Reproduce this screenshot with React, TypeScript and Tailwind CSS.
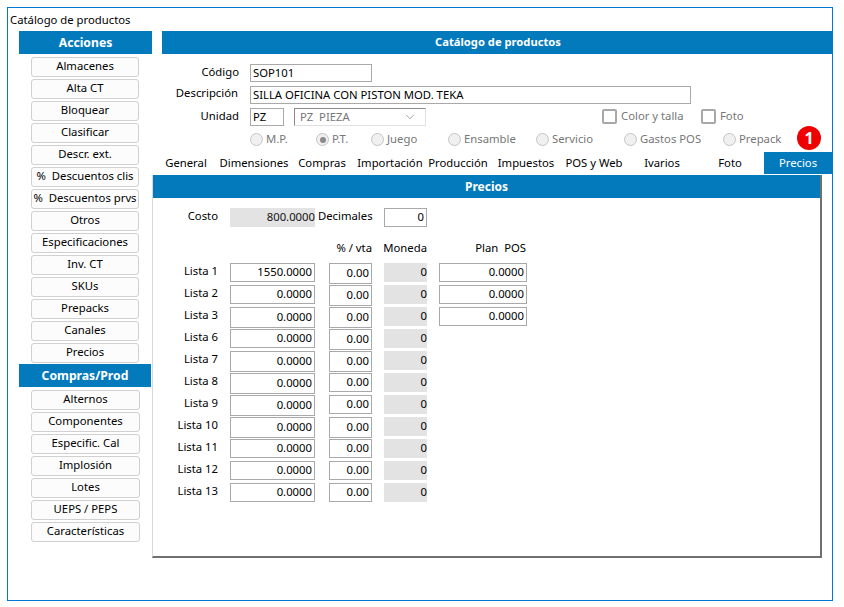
import { ChevronDown } from "lucide-react";

const accionesItems = ["Almacenes", "Alta CT", "Bloquear", "Clasificar", "Descr. ext.", "%  Descuentos clis", "%  Descuentos prvs", "Otros", "Especificaciones", "Inv. CT", "SKUs", "Prepacks", "Canales", "Precios"];
const comprasItems = ["Alternos", "Componentes", "Especific. Cal", "Implosión", "Lotes", "UEPS / PEPS", "Características"];
const tabs = ["General", "Dimensiones", "Compras", "Importación", "Producción", "Impuestos", "POS y Web", "Ivarios", "Foto", "Precios"];
const listas = [
  { name: "Lista 1", price: "1550.0000", plan: "0.0000", pctTall: true },
  { name: "Lista 2", price: "0.0000", plan: "0.0000", pctTall: true },
  { name: "Lista 3", price: "0.0000", plan: "0.0000", priceTall: true, pctTall: true },
  { name: "Lista 6", price: "0.0000", pctTall: true },
  { name: "Lista 7", price: "0.0000", priceTall: true, pctTall: true },
  { name: "Lista 8", price: "0.0000", priceTall: true },
  { name: "Lista 9", price: "0.0000", priceTall: true },
  { name: "Lista 10", price: "0.0000", priceTall: true, pctTall: true },
  { name: "Lista 11", price: "0.0000" },
  { name: "Lista 12", price: "0.0000" },
  { name: "Lista 13", price: "0.0000" },
];
const radios = [
  { label: "M.P.", w: "w-[66px]" },
  { label: "P.T.", w: "w-[55px]", checked: true },
  { label: "Juego", w: "w-[77px]" },
  { label: "Ensamble", w: "w-[88px]" },
  { label: "Servicio", w: "w-[88px]" },
  { label: "Gastos POS", w: "w-[99px]" },
  { label: "Prepack", w: "w-[74px]" },
];

function SideHeader({ title, className }: { title: string; className: string }) {
  return (
    <div className={`h-[23px] bg-[#037abb] text-white font-bold text-[12.2px] flex items-center justify-center pt-[2px] ${className}`}>
      {title}
    </div>
  );
}

function SideButton({ label, className }: { label: string; className: string }) {
  return (
    <button className={`h-[20px] ml-[12px] rounded-[3px] border border-[#d0d0d0] bg-[#fcfcfc] text-black text-center leading-[14px] pb-[3px] whitespace-pre ${className}`}>
      {label}
    </button>
  );
}

function Field({ value, className, align = "right" }: { value: string; className: string; align?: "left" | "right" }) {
  return (
    <div className={`border border-[#a9a9a9] bg-white px-[2px] flex items-center shrink-0 whitespace-nowrap text-black ${align === "right" ? "justify-end" : "justify-start"} ${className}`}>
      {value}
    </div>
  );
}

function Radio({ label, w, checked }: { label: string; w: string; checked?: boolean }) {
  return (
    <div className={`flex items-center gap-[3px] text-[#777] ${w}`}>
      <span className="w-[13px] h-[13px] rounded-full border border-[#c4c4c4] bg-[#f0f0f0] flex items-center justify-center">
        {checked && <span className="w-[6px] h-[6px] rounded-full bg-[#8a8a8a]" />}
      </span>
      {label}
    </div>
  );
}

function Check({ label, className }: { label: string; className: string }) {
  return (
    <div className={`flex items-center gap-[4px] text-[#777] ${className}`}>
      <span className="w-[15px] h-[15px] rounded-[2px] border-2 border-[#a8a8a8] bg-white" />
      {label}
    </div>
  );
}

export default function App() {
  return (
    <div className="w-[844px] h-[607px] bg-white pt-[7px] pl-[7px] text-[11.3px] text-black" style={{ fontFamily: '"Noto Sans", sans-serif' }}>
      <div className="w-[826px] h-[594px] border border-[#0078d7] flex flex-col">
        <div className="h-[23px] pl-[2px] pt-[3px] leading-[17px] shrink-0">Catálogo de productos</div>
        <div className="flex flex-1 pl-[11px]">
          {/* barra lateral */}
          <div className="w-[133px] shrink-0 flex flex-col">
            <SideHeader title="Acciones" className="w-[133px]" />
            <div className="flex flex-col gap-[2px] mt-[3px]">
              {accionesItems.map((item) => (
                <SideButton key={item} label={item} className="w-[108px]" />
              ))}
            </div>
            <SideHeader title="Compras/Prod" className="w-[132px] mt-[1px]" />
            <div className="flex flex-col gap-[2px] mt-[3px]">
              {comprasItems.map((item) => (
                <SideButton key={item} label={item} className="w-[109px]" />
              ))}
            </div>
          </div>

          {/* contenido */}
          <div className="w-[680px] flex flex-col">
            <div className="ml-[10px] h-[23px] bg-[#037abb] text-white font-bold text-[11.2px] flex items-center justify-center pl-[2px]">
              Catálogo de productos
            </div>

            <div className="flex items-center mt-[10px] h-[18px]">
              <span className="w-[87px] text-right pb-[2px]">Código</span>
              <Field value="SOP101" align="left" className="ml-[11px] w-[122px] h-[18px]" />
            </div>
            <div className="flex items-center mt-[4px] h-[18px]">
              <span className="w-[86px] text-right pb-[4px]">Descripción</span>
              <Field value="SILLA OFICINA CON PISTON MOD. TEKA" align="left" className="ml-[12px] w-[441px] h-[18px]" />
            </div>
            <div className="flex items-center mt-[4px] h-[18px]">
              <span className="w-[87px] text-right pb-[2px]">Unidad</span>
              <Field value="PZ" align="left" className="ml-[11px] w-[34px] h-[18px]" />
              <div className="ml-[10px] w-[132px] h-[18px] border border-t-[#8a8a8a] border-l-[#8a8a8a] border-r-[#e0e0e0] border-b-[#e0e0e0] pl-[5px] pr-[8px] flex items-center justify-between text-[#777] whitespace-pre">
                PZ  PIEZA
                <ChevronDown size={14} strokeWidth={1} className="text-[#666]" />
              </div>
              <Check label="Color y talla" className="ml-[176px] w-[99px] pb-[2px]" />
              <Check label="Foto" className="pb-[2px]" />
            </div>

            <div className="flex items-center mt-[5px] h-[17px] ml-[98px] relative">
              {radios.map((r) => (
                <Radio key={r.label} {...r} />
              ))}
              <span className="absolute left-[547px] top-[-5px] w-[24px] h-[24px] rounded-full bg-[#ee0000] text-white font-bold text-[16px] flex items-center justify-center">
                1
              </span>
            </div>

            <div className="grid grid-cols-10 h-[22px] mt-[4px]">
              {tabs.map((tab) => (
                <div
                  key={tab}
                  className={`flex items-center justify-center whitespace-nowrap ${tab === "Precios" ? "bg-[#037abb] text-white" : ""}`}
                >
                  {tab}
                </div>
              ))}
            </div>

            <div className="w-[670px] h-[383px] mt-[1px] border-l border-l-[#d8d8d8] border-r-2 border-r-[#707070] border-b-2 border-b-[#707070] flex flex-col">
              <div className="h-[23px] bg-[#037abb] text-white font-bold text-[12px] flex items-center justify-center shrink-0">Precios</div>

              <div className="flex items-center h-[19px] mt-[10px]">
                <span className="w-[65px] text-right pb-[3px]">Costo</span>
                <div className="ml-[12px] w-[85px] h-[19px] bg-[#e3e3e3] flex items-center justify-end text-[#111]">800.0000</div>
                <span className="ml-[3px] w-[54px] pb-[3px] whitespace-nowrap">Decimales</span>
                <Field value="0" className="ml-[12px] w-[43px] h-[19px]" />
              </div>

              <div className="flex items-center h-[16px] mt-[13px]">
                <span className="ml-[162px] w-[57px] text-right">% / vta</span>
                <span className="ml-[11px] w-[44px] text-right whitespace-nowrap">Moneda</span>
                <span className="ml-[12px] w-[87px] text-right whitespace-pre">Plan  POS</span>
              </div>

              <div className="flex flex-col gap-[2px] mt-[7px]">
                {listas.map((l) => (
                  <div key={l.name} className="flex items-start h-[20px]">
                    <span className="w-[65px] text-right leading-[16px]">{l.name}</span>
                    <Field value={l.price} className={`ml-[12px] w-[85px] ${l.priceTall ? "h-[21px]" : "h-[19px]"}`} />
                    <Field value="0.00" className={`ml-[14px] w-[43px] ${l.pctTall ? "h-[21px]" : "h-[19px]"}`} />
                    <div className="ml-[12px] w-[43px] h-[19px] bg-[#e3e3e3] flex items-center justify-end">0</div>
                    {l.plan && <Field value={l.plan} className="ml-[12px] w-[88px] h-[19px]" />}
                  </div>
                ))}
              </div>
            </div>
          </div>
        </div>
      </div>
    </div>
  );
}
